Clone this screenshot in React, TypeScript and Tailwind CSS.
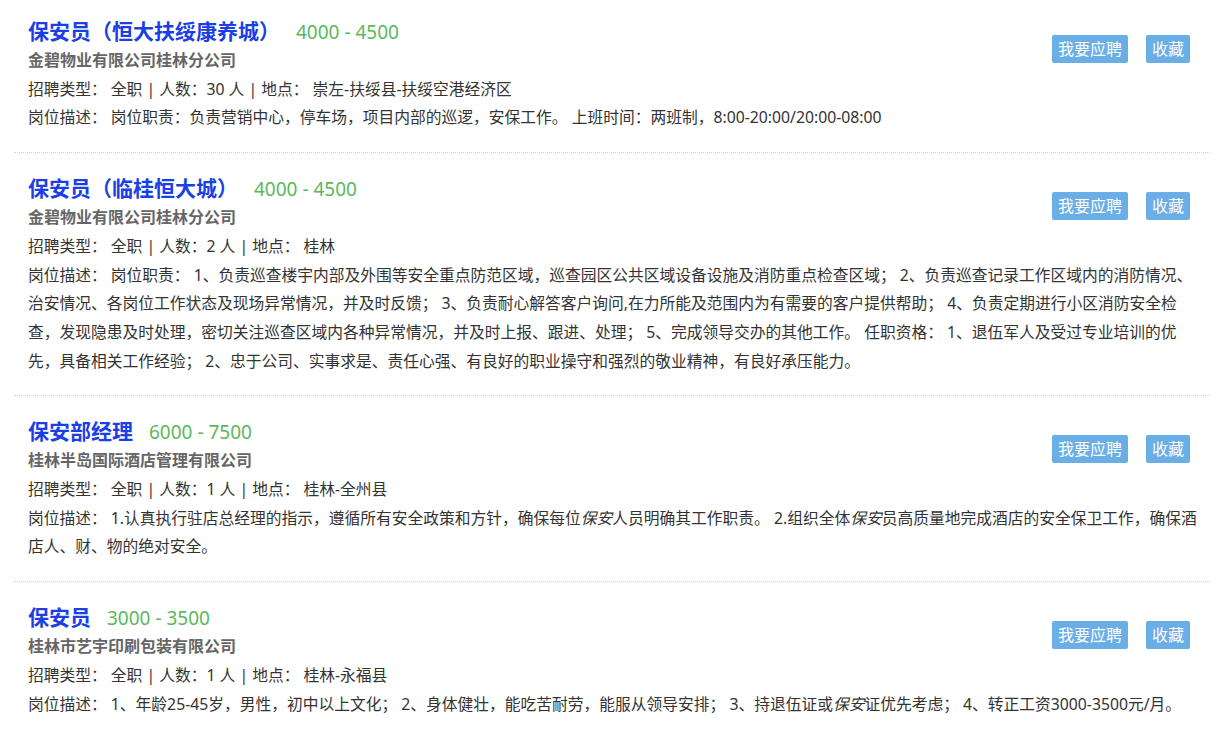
import type { ReactNode } from 'react';

type Job = {
  title: string;
  salary: string;
  company: string;
  headcount: string;
  location: string;
  desc: ReactNode;
};

const jobs: Job[] = [
  {
    title: '保安员（恒大扶绥康养城）',
    salary: '4000 - 4500',
    company: '金碧物业有限公司桂林分公司',
    headcount: '30',
    location: '崇左-扶绥县-扶绥空港经济区',
    desc: '岗位职责：负责营销中心，停车场，项目内部的巡逻，安保工作。 上班时间：两班制，8:00-20:00/20:00-08:00',
  },
  {
    title: '保安员（临桂恒大城）',
    salary: '4000 - 4500',
    company: '金碧物业有限公司桂林分公司',
    headcount: '2',
    location: '桂林',
    desc: '岗位职责： 1、负责巡查楼宇内部及外围等安全重点防范区域，巡查园区公共区域设备设施及消防重点检查区域； 2、负责巡查记录工作区域内的消防情况、治安情况、各岗位工作状态及现场异常情况，并及时反馈； 3、负责耐心解答客户询问,在力所能及范围内为有需要的客户提供帮助； 4、负责定期进行小区消防安全检查，发现隐患及时处理，密切关注巡查区域内各种异常情况，并及时上报、跟进、处理； 5、完成领导交办的其他工作。 任职资格： 1、退伍军人及受过专业培训的优先，具备相关工作经验； 2、忠于公司、实事求是、责任心强、有良好的职业操守和强烈的敬业精神，有良好承压能力。',
  },
  {
    title: '保安部经理',
    salary: '6000 - 7500',
    company: '桂林半岛国际酒店管理有限公司',
    headcount: '1',
    location: '桂林-全州县',
    desc: (
      <>
        1.认真执行驻店总经理的指示，遵循所有安全政策和方针，确保每位<em>保安</em>人员明确其工作职责。 2.组织全体<em>保安</em>员高质量地完成酒店的安全保卫工作，确保酒店人、财、物的绝对安全。
      </>
    ),
  },
  {
    title: '保安员',
    salary: '3000 - 3500',
    company: '桂林市艺宇印刷包装有限公司',
    headcount: '1',
    location: '桂林-永福县',
    desc: (
      <>
        1、年龄25-45岁，男性，初中以上文化； 2、身体健壮，能吃苦耐劳，能服从领导安排； 3、持退伍证或<em>保安</em>证优先考虑； 4、转正工资3000-3500元/月。
      </>
    ),
  },
];

function JobItem({ job }: { job: Job }) {
  return (
    <li className="border-b border-dotted border-[#d4d4d4] pt-[21px] pb-[20px] pl-[14px] pr-[10px] first:pt-[17px] last:border-b-0">
      <div className="float-right mt-[18px] mr-[10px] flex gap-[18px]">
        <button className="h-[28px] rounded-[2px] bg-[#6aaee6] px-[6px] text-[16px] leading-[28px] text-white">
          我要应聘
        </button>
        <button className="h-[28px] rounded-[2px] bg-[#6aaee6] px-[6px] text-[16px] leading-[28px] text-white">
          收藏
        </button>
      </div>
      <div className="h-[29px] leading-[29px]">
        <span className="text-[21px] font-bold text-[#1a3fe6]">{job.title}</span>
        <span className="ml-4 text-[19px] text-[#5cb85c]">{job.salary}</span>
      </div>
      <div className="text-[16px] font-bold leading-[28.7px] text-[#666]">
        {job.company}
      </div>
      <div className="text-[15.75px] leading-[28.7px] text-[#333]">
        招聘类型： 全职 | 人数：{job.headcount} 人 | 地点： {job.location}
      </div>
      <div className="text-[15.75px] leading-[28.7px] text-[#333]">
        岗位描述： {job.desc}
      </div>
    </li>
  );
}

export default function App() {
  return (
    <div
      className="min-h-screen bg-white px-[14px]"
      style={{ fontFamily: '"Noto Sans", "Noto Sans CJK SC", sans-serif' }}
    >
      <ul>
        {jobs.map((job) => (
          <JobItem key={job.title + job.company} job={job} />
        ))}
      </ul>
    </div>
  );
}
